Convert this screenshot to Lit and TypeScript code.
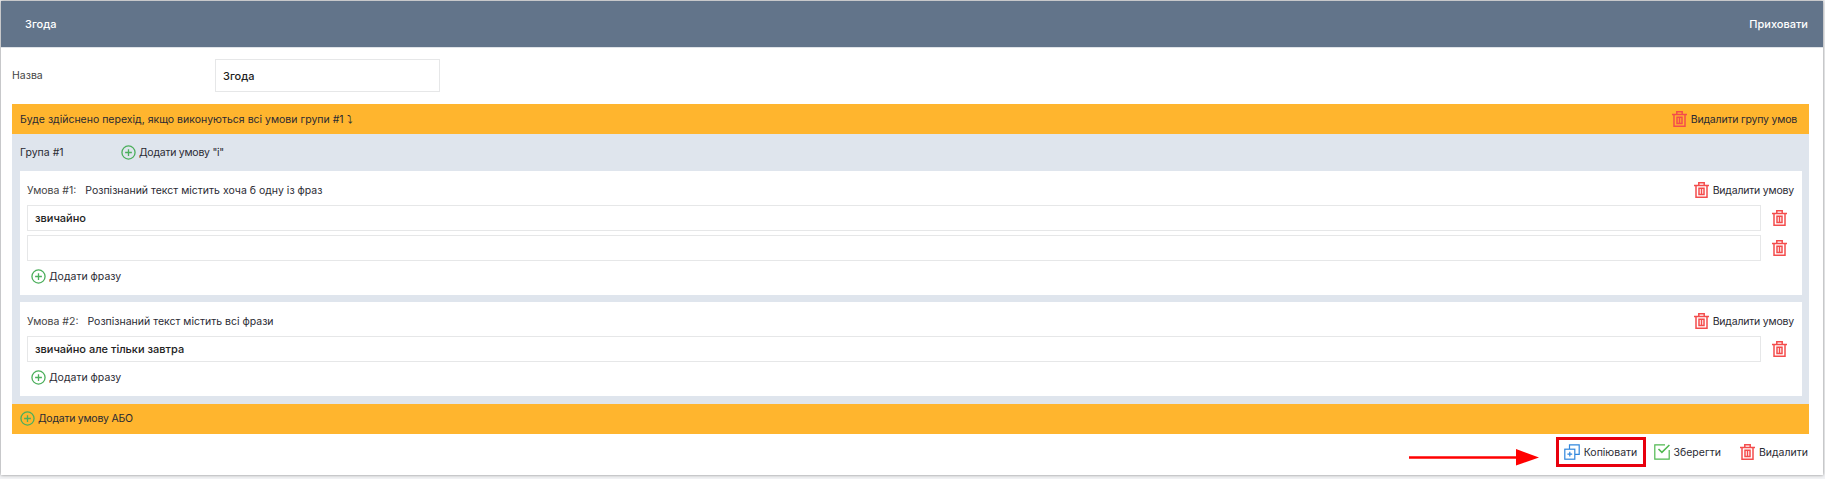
import { LitElement, html, css, svg } from "lit";
import { customElement } from "lit/decorators.js";

const plus = html`<svg class="ic" viewBox="0 0 16 16" width="15" height="15"><circle cx="8" cy="8" r="7" fill="none" stroke="#4caf5c" stroke-width="1.4"/><path d="M8 4.4v7.2M4.4 8h7.2" stroke="#4caf5c" stroke-width="1.4"/></svg>`;
const trash = html`<svg class="ic" viewBox="0 0 15 16" width="15" height="16" fill="none" stroke="#f44c4c" stroke-width="1.5"><path d="M0 3.4h15M4.8 3.2V.8h5.4v2.4M2 3.4v11.8h11V3.4M5 6.2h5v6.4H5zM7.5 6.2v6.4"/></svg>`;
const copy = html`<svg class="ic" viewBox="0 0 16 16" width="16" height="16" fill="none" stroke="#2f86dd" stroke-width="1.2"><path d="M5.5 5V.8h9.7v9.6H11"/><rect x=".8" y="5.2" width="10" height="10"/><path d="M5.8 7.8v4.8M3.4 10.2h4.8"/></svg>`;
const save = html`<svg class="ic" viewBox="0 0 16 16" width="16" height="16" fill="none" stroke="#4fb84f" stroke-width="1.2"><path d="M11 .8H.8v14.4h14.4V6"/><path d="M4.5 5l3.4 3.4L15.4 1" stroke-width="1.5"/></svg>`;

@customElement("app-root")
export class AppRoot extends LitElement {
  static styles = css`
    :host { display: block; width: 1825px; height: 479px; background: #f1f2f4; font-family: Inter, "Noto Sans", sans-serif; font-size: 10.5px; color: #2a2a33; overflow: hidden; }
    * { box-sizing: border-box; }
    .card { position: relative; margin: 1px 2px 0 1px; height: 474px; background: #fff; box-shadow: 0 0 3px rgba(0,0,0,.45); }
    .head { height: 47px; background: #62748a; color: #fff; display: flex; justify-content: space-between; align-items: center; padding: 0 15px 0 24px; font-weight: 500; font-size: 11px; border-bottom: 1px solid #dfe3e8; }
    .name { display: flex; align-items: center; height: 33px; margin: 11px 0 12px 11px; }
    .name label { width: 203px; color: #444; }
    .box { border: 1px solid #e6e7e8; background: #fff; display: flex; align-items: center; padding-left: 7px; font-size: 11px; font-weight: 500; color: #222; }
    .name .box { width: 225px; height: 33px; }
    .main { margin: 0 14px 0 11px; }
    .orange { height: 30px; background: #ffb52e; display: flex; align-items: center; justify-content: space-between; padding: 0 12px 0 8px; }
    .orange.add { justify-content: flex-start; padding-bottom: 2px; }
    .link { display: inline-flex; align-items: center; gap: 3px; white-space: nowrap; }
    .tight { letter-spacing: -.25px; }
    .tight2 { letter-spacing: -.2px; gap: 4px; }
    .ic { flex: none; }
    .group { background: #dfe5ed; padding: 0 7px 8px 8px; height: 270px; }
    .ghead { height: 37px; display: flex; align-items: center; }
    .ghead span.t { width: 101px; }
    .cond { background: #fff; padding: 0 8px 0 7px; margin-bottom: 7px; }
    .c1 { height: 124px; }
    .c2 { height: 94px; }
    .chead { height: 34px; display: flex; align-items: center; justify-content: space-between; padding-top: 4px; }
    .chead .n { color: #444; margin-right: 9px; }
    .row { display: flex; align-items: center; justify-content: space-between; margin-bottom: 4px; }
    .row .box { width: 1734px; height: 26px; }
    .row .ic { margin-right: 7px; }
    .addp { height: 22px; display: flex; align-items: center; padding-left: 4px; }
    .foot { display: flex; justify-content: flex-end; align-items: center; height: 30px; margin: 3px 15px 0 0; }
    .foot .link { gap: 4px; }
    .foot .copy { width: 90px; height: 30px; border: 3px solid #e8000d; justify-content: center; }
    .foot .saveb { margin-left: 8px; }
    .foot .del { margin-left: 19px; }
    .arrow { position: absolute; left: 1407px; top: 445px; }
  `;
  render() {
    return html`<div class="card">
      <div class="head"><span>Згода</span><span>Приховати</span></div>
      <div class="name"><label>Назва</label><div class="box">Згода</div></div>
      <div class="main">
        <div class="orange"><span>Буде здійснено перехід, якщо виконуються всі умови групи #1 ⤵</span><span class="link tight2">${trash}Видалити групу умов</span></div>
        <div class="group">
          <div class="ghead"><span class="t">Група #1</span><span class="link tight">${plus}Додати умову "і"</span></div>
          <div class="cond c1">
            <div class="chead"><span><span class="n">Умова #1:</span>Розпізнаний текст містить хоча б одну із фраз</span><span class="link tight2">${trash}Видалити умову</span></div>
            <div class="row"><div class="box">звичайно</div>${trash}</div>
            <div class="row"><div class="box"></div>${trash}</div>
            <div class="addp"><span class="link">${plus}Додати фразу</span></div>
          </div>
          <div class="cond c2">
            <div class="chead"><span><span class="n">Умова #2:</span>Розпізнаний текст містить всі фрази</span><span class="link tight2">${trash}Видалити умову</span></div>
            <div class="row"><div class="box">звичайно але тільки завтра</div>${trash}</div>
            <div class="addp"><span class="link">${plus}Додати фразу</span></div>
          </div>
        </div>
        <div class="orange add"><span class="link tight">${plus}Додати умову АБО</span></div>
      </div>
      <div class="foot">
        <span class="link copy">${copy}Копіювати</span>
        <span class="link saveb">${save}Зберегти</span>
        <span class="link del">${trash}Видалити</span>
      </div>
      <svg class="arrow" width="132" height="24" viewBox="0 0 132 24">${svg`<path d="M1 11.5h108" stroke="#f00" stroke-width="2.5"/><path d="M108 3l23 8.5-23 8z" fill="#f00"/>`}</svg>
    </div>`;
  }
}
